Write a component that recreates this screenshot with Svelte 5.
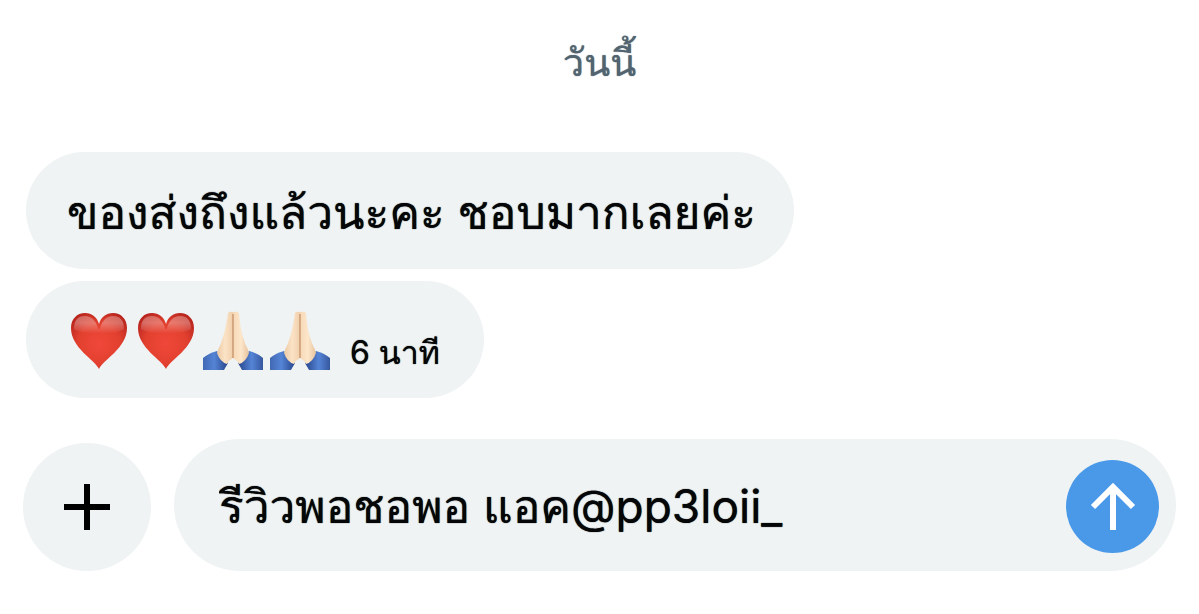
<script>
  let draft = $state('รีวิวพอชอพอ แอค@pp3loii_');
</script>

{#snippet heart()}
  <svg class="emoji" viewBox="0 0 60 60" role="img" aria-label="หัวใจ">
    <defs>
      <radialGradient id="heart-fill" cx="50%" cy="55%" r="62%">
        <stop offset="0" stop-color="#f0483a" />
        <stop offset="0.6" stop-color="#e2402f" />
        <stop offset="1" stop-color="#b9261e" />
      </radialGradient>
      <linearGradient id="heart-shine" x1="0" y1="0" x2="0" y2="1">
        <stop offset="0" stop-color="#fff" stop-opacity="0.3" />
        <stop offset="0.4" stop-color="#fff" stop-opacity="0.3" />
        <stop offset="1" stop-color="#fff" stop-opacity="0" />
      </linearGradient>
    </defs>
    <path
      fill="url(#heart-fill)"
      d="M30 58 C26 49 2 37 2 17 C2 8 8 2 16 2 C23 2 28 6 30 13 C32 6 37 2 44 2 C52 2 58 8 58 17 C58 37 34 49 30 58Z"
    />
    <path
      fill="url(#heart-shine)"
      d="M5 18 C5 9 9 5 16 5 C23 5 27 10 29 17 L30 19 L31 17 C33 10 37 5 44 5 C51 5 55 9 55 18 C48 24 12 24 5 18Z"
    />
  </svg>
{/snippet}

{#snippet hands()}
  <svg class="emoji" viewBox="0 0 60 60" role="img" aria-label="พนมมือ">
    <defs>
      <linearGradient id="skin-left" x1="0" y1="0" x2="1" y2="0">
        <stop offset="0" stop-color="#ecc9a4" />
        <stop offset="0.5" stop-color="#fbe3c6" />
        <stop offset="1" stop-color="#f0cfab" />
      </linearGradient>
      <linearGradient id="skin-right" x1="0" y1="0" x2="1" y2="0">
        <stop offset="0" stop-color="#f6d8b6" />
        <stop offset="0.5" stop-color="#fde6ca" />
        <stop offset="1" stop-color="#e6c29c" />
      </linearGradient>
      <linearGradient id="sleeve-left" x1="0" y1="0" x2="1" y2="0">
        <stop offset="0" stop-color="#4168b3" />
        <stop offset="0.45" stop-color="#5584d6" />
        <stop offset="1" stop-color="#27458a" />
      </linearGradient>
      <linearGradient id="sleeve-right" x1="1" y1="0" x2="0" y2="0">
        <stop offset="0" stop-color="#36589f" />
        <stop offset="0.45" stop-color="#5584d6" />
        <stop offset="1" stop-color="#27458a" />
      </linearGradient>
    </defs>
    <path fill="url(#sleeve-left)" d="M0 47 Q6 42 14 40 L25 52 L21 59 H0Z" />
    <path fill="url(#sleeve-right)" d="M60 47 Q54 42 46 40 L35 52 L39 59 H60Z" />
    <path fill="url(#skin-left)" d="M25 2 Q26 0 30 1 V47 Q26 49 24 53 Q17 51 14 42 C15 37 18 34 19 29 C21 24 23 15 25 2Z" />
    <path fill="url(#skin-right)" d="M30 1 Q34 0 36 2 C37 15 39 24 41 29 C42 34 45 37 46 42 Q43 51 36 53 Q34 49 30 47Z" />
    <path fill="none" stroke="#b67f53" stroke-width="1" d="M30 3 V47" />
  </svg>
{/snippet}

<main>
  <h1>วันนี้</h1>

  <section class="messages" aria-label="ข้อความ">
    <p class="bubble">ของส่งถึงแล้วนะคะ ชอบมากเลยค่ะ</p>
    <div class="bubble">
      <span class="reactions">
        {@render heart()}
        {@render heart()}
        {@render hands()}
        {@render hands()}
      </span>
      <time>6 นาที</time>
    </div>
  </section>

  <form class="composer" onsubmit={(event) => event.preventDefault()}>
    <button class="add" type="button" aria-label="เพิ่ม">
      <svg viewBox="0 0 48 48" aria-hidden="true">
        <path d="M24 1 V47 M1 24 H47" fill="none" stroke="#000" stroke-width="6" />
      </svg>
    </button>
    <div class="field">
      <input type="text" aria-label="เขียนข้อความ" bind:value={draft} />
      <button class="send" type="submit" aria-label="ส่ง">
        <svg viewBox="0 0 48 48" aria-hidden="true">
          <path d="M24 48 V4 M4 25 L24 5 L44 25" fill="none" stroke="#fff" stroke-width="6" />
        </svg>
      </button>
    </div>
  </form>
</main>

<style>
  :global(body) {
    margin: 0;
    background: #fff;
  }

  main {
    box-sizing: border-box;
    padding: 32px 23px 40px;
    color: #050607;
    font-family: Inter, Loma, "Noto Sans", sans-serif;
    text-shadow: 0 0 1px currentColor;
  }

  h1 {
    margin: 0 0 60px;
    color: #536471;
    font-size: 38px;
    font-weight: 400;
    line-height: 60px;
    text-align: center;
  }

  .messages {
    display: flex;
    flex-direction: column;
    align-items: flex-start;
    gap: 12px;
    margin: 0 3px 41px;
  }

  .bubble {
    display: flex;
    align-items: center;
    box-sizing: border-box;
    min-height: 117px;
    margin: 0;
    padding: 2px 38px 0 41px;
    border-radius: 59px;
    background: #eff3f4;
    font-size: 46px;
    line-height: 64px;
  }

  .reactions {
    display: flex;
    gap: 7px;
    margin-left: 2px;
  }

  .emoji {
    display: block;
    width: 60px;
    height: 60px;
  }

  time {
    padding: 24px 6px 0 20px;
    font-size: 32px;
    line-height: 40px;
  }

  .composer {
    display: flex;
    align-items: flex-end;
    gap: 23px;
  }

  button {
    display: grid;
    flex: none;
    place-items: center;
    padding: 0;
    border: 0;
    border-radius: 50%;
    cursor: pointer;
  }

  button svg {
    width: 48px;
    height: 48px;
  }

  .add {
    width: 128px;
    height: 128px;
    background: #eff3f4;
  }

  .field {
    display: flex;
    flex: 1;
    align-items: center;
    box-sizing: border-box;
    min-width: 0;
    height: 132px;
    padding: 2px 17px 0 45px;
    border-radius: 66px;
    background: #eff3f4;
  }

  input {
    flex: 1;
    min-width: 0;
    height: 100px;
    padding: 0;
    border: 0;
    outline: 0;
    background: none;
    color: inherit;
    font: inherit;
    font-size: 46px;
    text-shadow: inherit;
  }

  .send {
    width: 93px;
    height: 93px;
    background: #4a99e9;
  }
</style>
